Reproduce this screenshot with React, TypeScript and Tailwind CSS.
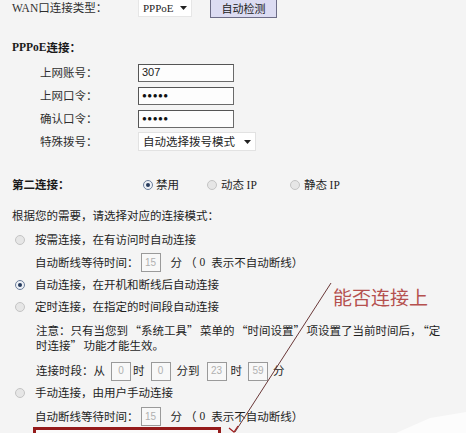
import React from 'react';

const serif = "font-['Liberation_Serif','Noto_Sans_CJK_SC',serif]";

const Radio = ({ checked = false }: { checked?: boolean }) => (
  <span
    className={
      'inline-flex w-[10px] h-[10px] shrink-0 items-center justify-center rounded-full border ' +
      (checked ? 'border-[#6d7f9c] bg-[#eef1f6]' : 'border-[#c4c4c4] bg-[#e6e6e6]')
    }
  >
    {checked && <span className="w-[4px] h-[4px] rounded-full bg-[#263a5c]" />}
  </span>
);

const Caret = () => (
  <svg width="7" height="4" viewBox="0 0 7 4" className="shrink-0">
    <path d="M0 0 L7 0 L3.5 4 Z" fill="#222" />
  </svg>
);

const TextBox = ({ children }: { children?: React.ReactNode }) => (
  <div className="w-[96px] h-[18px] bg-[#fdfdfd] border border-[#6a6a6a] border-t-[#555] border-l-[#555] flex items-center px-[3px] text-[11px] text-[#222] font-['Liberation_Sans',sans-serif]">
    {children}
  </div>
);

const SmallBox = ({ value }: { value: string }) => (
  <span className="inline-flex w-[20px] h-[19px] items-center justify-center border border-[#9a9a9a] bg-[#f8f8f8] text-[10px] text-[#b0b0b0] font-['Liberation_Sans',sans-serif]">
    {value}
  </span>
);

const Dots = () => (
  <span className="text-[8px] tracking-[0.5px] text-[#111]">●●●●●</span>
);

// open / close quotes with the wide spacing of the original font
const Lq = () => <span className="ml-[1.5px]">“</span>;
const Rq = () => <span className="mr-[1.5px]">”</span>;

const FormRow = ({ label, children }: { label: string; children: React.ReactNode }) => (
  <div className="flex items-center h-[23px]">
    <span className="w-[138px] pl-[40px] text-[#2e2e2e]">{label}</span>
    {children}
  </div>
);

const WaitRow = () => (
  <>
    <span>自动断线等待时间：</span>
    <span className="ml-[2px]"><SmallBox value="15" /></span>
    <span className="ml-[10px]">分</span>
    <span className="ml-[3px]">（</span>
    <span className={serif + ' ml-[3px]'}>0</span>
    <span className="ml-[6px]">表示不自动断线）</span>
  </>
);

const App = () => {
  return (
    <div className="relative w-[466px] h-[433px] overflow-hidden bg-[#f4f4f4] text-[11.5px] leading-none text-[#1e1e1e] font-['Noto_Sans_CJK_SC','Liberation_Sans',sans-serif]">
      {/* WAN type */}
      <div className="flex items-center h-[16px]">
        <span className="w-[138px] pl-[12px] text-[#2e2e2e]">
          <span className={serif}>WAN</span>口连接类型：
        </span>
        <div className="w-[54px] h-[18px] shrink-0 bg-white border border-[#e6e6e6] flex items-center justify-between px-[4px]">
          <span className={serif + ' text-[11px]'}>PPPoE</span>
          <Caret />
        </div>
        <button className="ml-[18px] w-[67px] h-[19px] shrink-0 bg-[#dcdcf2] border border-[#6c6c86] text-[11px] text-[#222] flex items-center justify-center">
          自动检测
        </button>
      </div>

      <div className="mt-[23px] h-[18px] pl-[12px] flex items-center font-bold text-[#1a1a1a]">
        <span className={serif}>PPPoE</span>连接：
      </div>

      <div className="mt-[4px]">
        <FormRow label="上网账号：">
          <TextBox>307</TextBox>
        </FormRow>
        <FormRow label="上网口令：">
          <TextBox><Dots /></TextBox>
        </FormRow>
        <FormRow label="确认口令：">
          <TextBox><Dots /></TextBox>
        </FormRow>
        <FormRow label="特殊拨号：">
          <div className="w-[118px] h-[19px] bg-white border border-[#e2e2e2] flex items-center justify-between pl-[4px] pr-[4px]">
            <span>自动选择拨号模式</span>
            <Caret />
          </div>
        </FormRow>
      </div>

      {/* second connection */}
      <div className="mt-[22px] h-[20px] flex items-center">
        <span className="w-[143px] pl-[12px] font-bold text-[#1a1a1a]">第二连接：</span>
        <span className="w-[64px] flex items-center gap-[3px]">
          <Radio checked />
          <span>禁用</span>
        </span>
        <span className="w-[83px] flex items-center gap-[4px]">
          <Radio />
          <span>动态 <span className={serif}>IP</span></span>
        </span>
        <span className="flex items-center gap-[4px]">
          <Radio />
          <span>静态 <span className={serif}>IP</span></span>
        </span>
      </div>

      <div className="mt-[11px] h-[20px] pl-[12px] flex items-center">根据您的需要，请选择对应的连接模式：</div>

      <div className="mt-[3px] h-[22px] pl-[15px] flex items-center gap-[10px]">
        <Radio />
        <span>按需连接，在有访问时自动连接</span>
      </div>
      <div className="h-[23px] pl-[35px] flex items-center">
        <WaitRow />
      </div>
      <div className="h-[22px] pl-[15px] flex items-center gap-[10px]">
        <Radio checked />
        <span>自动连接，在开机和断线后自动连接</span>
      </div>
      <div className="h-[21px] pl-[15px] flex items-center gap-[10px]">
        <Radio />
        <span>定时连接，在指定的时间段自动连接</span>
      </div>
      <p className="mt-[6px] pl-[36px] leading-[15px]">
        注意：只有当您到<Lq />系统工具<Rq />菜单的<Lq />时间设置<Rq />项设置了当前时间后，<Lq />定
        <br />
        时连接<Rq />功能才能生效。
      </p>
      <div className="mt-[7px] h-[22px] pl-[36px] flex items-center">
        <span>连接时段：从</span>
        <span className="ml-[6px]"><SmallBox value="0" /></span>
        <span className="ml-[2px]">时</span>
        <span className="ml-[6px]"><SmallBox value="0" /></span>
        <span className="ml-[6px]">分到</span>
        <span className="ml-[7px]"><SmallBox value="23" /></span>
        <span className="ml-[4px]">时</span>
        <span className="ml-[6px]"><SmallBox value="59" /></span>
        <span className="ml-[5px]">分</span>
      </div>
      <div className="h-[21px] pl-[15px] flex items-center gap-[10px]">
        <Radio />
        <span>手动连接，由用户手动连接</span>
      </div>
      <div className="mt-[3px] h-[21px] pl-[35px] flex items-center">
        <WaitRow />
      </div>
      <div className="ml-[33px] w-[188px] h-[20px] border-[3px] border-b-0 border-[#951b1b] bg-[#fafafa]" />

      {/* annotation */}
      <svg className="absolute inset-0 pointer-events-none" width="466" height="433">
        <path d="M396 433 L430 418 L466 412 L466 433 Z" fill="#ffffff" opacity="0.7" />
        <line x1="331" y1="283" x2="235" y2="432" stroke="#6a3838" strokeWidth="1" />
        <path d="M229 428 L234 432 L238 426" fill="none" stroke="#a02020" strokeWidth="1.2" />
      </svg>
      <span className="absolute left-[333px] top-[287px] text-[19px] leading-none text-[#b5504e]">能否连接上</span>
    </div>
  );
};

export default App;
